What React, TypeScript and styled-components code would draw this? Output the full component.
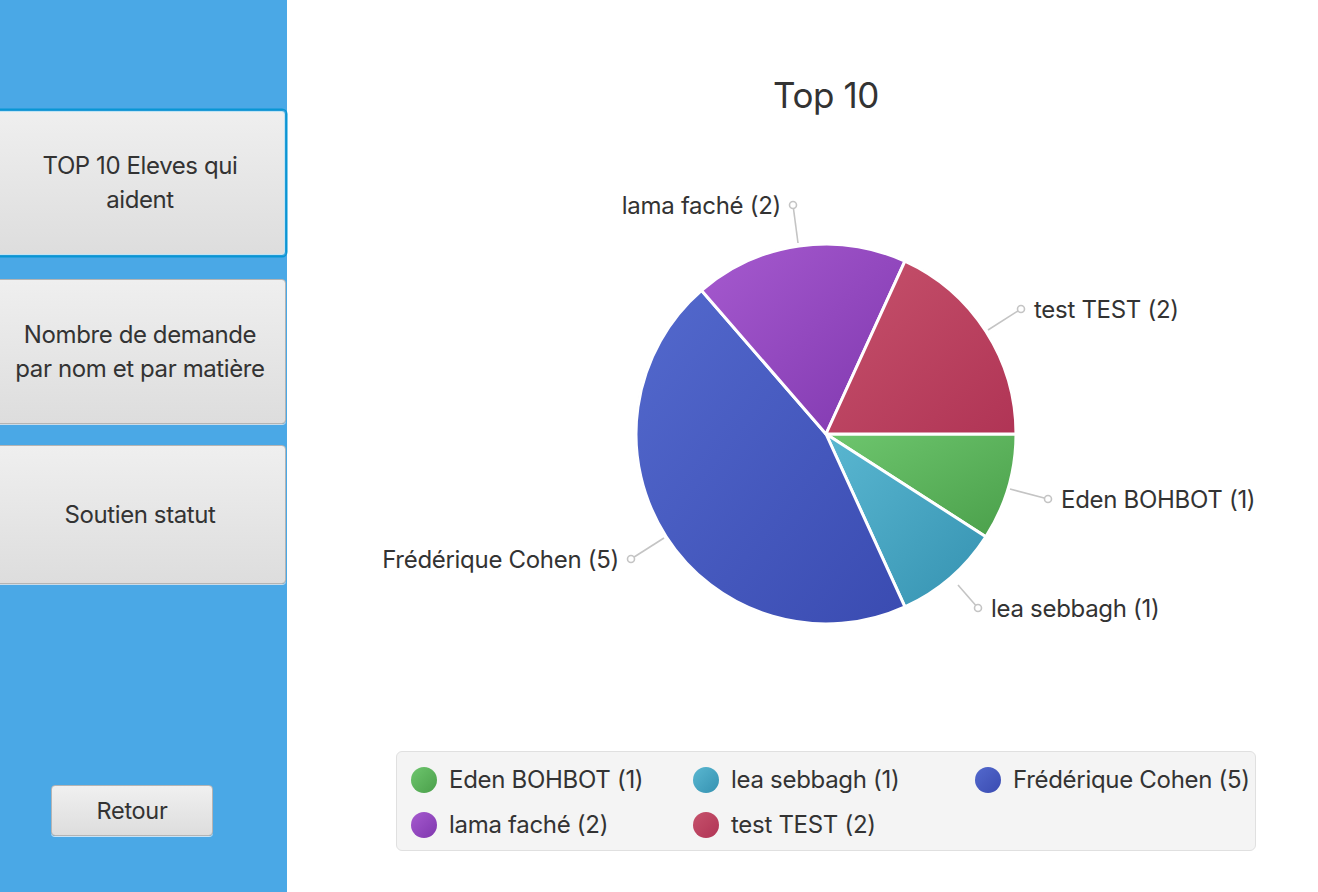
import styled, { createGlobalStyle } from "styled-components";

const GlobalStyle = createGlobalStyle`
  html, body {
    margin: 0;
    padding: 0;
    background: #ffffff;
  }
  body {
    font-family: Inter, "Noto Sans", "Liberation Sans", sans-serif;
    color: #333333;
  }
`

const Page = styled.div`
  display: flex;
  width: 1318px;
  height: 892px;
  overflow: hidden;
`

const Sidebar = styled.div`
  width: 287px;
  flex-shrink: 0;
  background: #4aa8e6;
  display: flex;
  flex-direction: column;
  padding-top: 110px;
  box-sizing: border-box;
`

const MenuButton = styled.div<{ $h: number; $focused?: boolean }>`
  margin-left: -6px;
  width: 292px;
  height: ${p => p.$h}px;
  box-sizing: border-box;
  margin-bottom: ${p => (p.$focused ? 23 : 21)}px;
  border-radius: 4px;
  border: 1px solid ${p => (p.$focused ? "#1f9ad6" : "#b4b4b4")};
  box-shadow: ${p =>
    p.$focused
      ? "0 0 0 1.5px #0896d4, inset 0 0 0 1px #bfe3f3"
      : "0 1px 0 #c9dbe8"};
  background: linear-gradient(#efefef, #dddddd);
  display: flex;
  align-items: center;
  justify-content: center;
  text-align: center;
  font-size: 24px;
  line-height: 34px;
  letter-spacing: -0.4px;
  color: #333;
  padding: 0 6px;
`

const BackButton = styled.div`
  margin-top: auto;
  margin-bottom: 56px;
  margin-left: 51px;
  width: 162px;
  height: 51px;
  box-sizing: border-box;
  border: 1px solid #b4b4b4;
  border-radius: 4px;
  box-shadow: 0 1px 0 #c9e3f5;
  background: linear-gradient(#f0f0f0, #dddddd);
  display: flex;
  align-items: center;
  justify-content: center;
  font-size: 23.5px;
  letter-spacing: -0.3px;
  color: #333;
`

const Main = styled.div`
  flex: 1;
  display: flex;
  flex-direction: column;
  padding-left: 109px;
  padding-right: 62px;
`

const Title = styled.div`
  text-align: center;
  font-size: 35px;
  line-height: 40px;
  margin-top: 75px;
  color: #333;
  letter-spacing: -0.4px;
`

const Chart = styled.svg`
  display: block;
  margin-top: 15px;
  overflow: visible;
`

const Legend = styled.div`
  margin-top: 6px;
  width: 860px;
  height: 100px;
  box-sizing: border-box;
  background: #f4f4f4;
  border: 1px solid #e0e0e0;
  border-radius: 6px;
  padding: 5px 14px;
  display: grid;
  grid-template-columns: repeat(3, 282px);
  grid-auto-rows: 45px;
`

const LegendItem = styled.div`
  display: flex;
  align-items: center;
  gap: 12px;
  font-size: 24px;
  color: #333;
  letter-spacing: -0.3px;
  white-space: nowrap;
`

const Swatch = styled.span<{ $from: string; $to: string }>`
  width: 26px;
  height: 26px;
  border-radius: 50%;
  background: linear-gradient(135deg, ${p => p.$from}, ${p => p.$to});
  flex-shrink: 0;
`

type Slice = { name: string; value: number; from: string; to: string };

const data: Slice[] = [
  { name: "Eden BOHBOT", value: 1, from: "#6ec66e", to: "#4a9f4a" },
  { name: "lea sebbagh", value: 1, from: "#5ab7d1", to: "#3592b1" },
  { name: "Frédérique Cohen", value: 5, from: "#5369cd", to: "#3a4bb1" },
  { name: "lama faché", value: 2, from: "#a65acf", to: "#7f37ae" },
  { name: "test TEST", value: 2, from: "#c6526c", to: "#b03455" },
];

// label anchors, in chart coordinates (page x - 396, page y - 130)
const labels = [
  { from: [614, 359], dot: [652, 369], text: [665, 369], anchor: "start" },
  { from: [562, 455], dot: [582, 478], text: [595, 478], anchor: "start" },
  { from: [268, 408], dot: [235, 429], text: [223, 429], anchor: "end" },
  { from: [402, 113], dot: [397, 75], text: [385, 75], anchor: "end" },
  { from: [592, 200], dot: [625, 179], text: [638, 179], anchor: "start" },
];

const CX = 430;
const CY = 304;
const R = 190;

function slicePath(a0: number, a1: number) {
  const x0 = CX + R * Math.cos(a0);
  const y0 = CY + R * Math.sin(a0);
  const x1 = CX + R * Math.cos(a1);
  const y1 = CY + R * Math.sin(a1);
  const large = a1 - a0 > Math.PI ? 1 : 0;
  return `M${CX},${CY} L${x0},${y0} A${R},${R} 0 ${large} 1 ${x1},${y1} Z`;
}

function PieChart() {
  const total = data.reduce((s, d) => s + d.value, 0);
  let acc = 0;
  return (
    <Chart width="860" height="615">
      <defs>
        {data.map((d, i) => (
          <linearGradient key={i} id={`g${i}`} x1="0" y1="0" x2="1" y2="1">
            <stop offset="0" stopColor={d.from} />
            <stop offset="1" stopColor={d.to} />
          </linearGradient>
        ))}
      </defs>
      <circle cx={CX} cy={CY} r={R + 1} fill="#e9e9e9" />
      {data.map((d, i) => {
        const a0 = (acc / total) * Math.PI * 2;
        acc += d.value;
        const a1 = (acc / total) * Math.PI * 2;
        return (
          <path
            key={i}
            d={slicePath(a0, a1)}
            fill={`url(#g${i})`}
            stroke="#ffffff"
            strokeWidth="3"
            strokeLinejoin="round"
          />
        );
      })}
      {labels.map((l, i) => (
        <g key={i}>
          <line
            x1={l.from[0]}
            y1={l.from[1]}
            x2={l.dot[0]}
            y2={l.dot[1]}
            stroke="#c4c4c4"
            strokeWidth="1.6"
          />
          <circle cx={l.dot[0]} cy={l.dot[1]} r="3.5" fill="#fff" stroke="#c4c4c4" strokeWidth="1.6" />
          <text
            x={l.text[0]}
            y={l.text[1]}
            textAnchor={l.anchor as "start" | "end"}
            dominantBaseline="central"
            fontFamily='Inter, "Noto Sans", sans-serif'
            fontSize="24"
            letterSpacing="-0.3"
            fill="#333"
          >
            {data[i].name} ({data[i].value})
          </text>
        </g>
      ))}
    </Chart>
  );
}

export default function App() {
  return (
    <Page>
      <GlobalStyle />
      <Sidebar>
        <MenuButton $h={146} $focused>
          TOP 10 Eleves qui
          <br />
          aident
        </MenuButton>
        <MenuButton $h={145}>
          Nombre de demande
          <br />
          par nom et par matière
        </MenuButton>
        <MenuButton $h={139}>Soutien statut</MenuButton>
        <BackButton>Retour</BackButton>
      </Sidebar>
      <Main>
        <Title>Top 10</Title>
        <PieChart />
        <Legend>
          {data.map((d, i) => (
            <LegendItem key={i}>
              <Swatch $from={d.from} $to={d.to} />
              {d.name} ({d.value})
            </LegendItem>
          ))}
        </Legend>
      </Main>
    </Page>
  );
}
